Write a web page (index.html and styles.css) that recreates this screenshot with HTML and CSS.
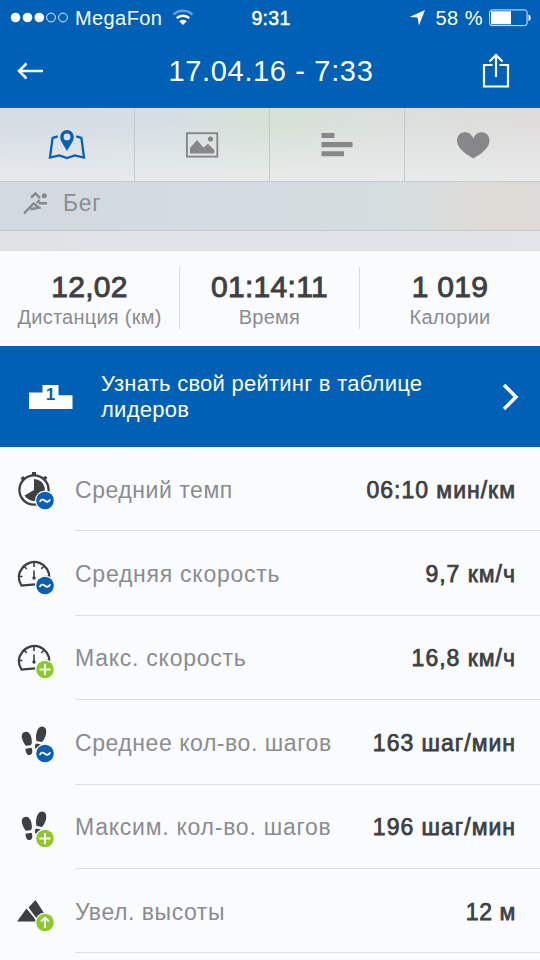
FILE: index.html
```html
<!DOCTYPE html>
<html lang="ru">
<head>
<meta charset="utf-8">
<title>17.04.16 - 7:33</title>
<link rel="stylesheet" href="styles.css">
</head>
<body>
<svg class="defs" width="0" height="0">
  <defs>
    <g id="avg">
      <circle cx="31" cy="33.500" r="10" fill="#fafbfd"/>
      <circle cx="31" cy="33.500" r="8.800" fill="#0860b4"/>
      <path d="M25.800 35c1.200-3 3.200-2.800 5.100-1.200s4 1.300 5.300-1.500" fill="none" stroke="#fff" stroke-width="1.800"/>
    </g>
    <g id="plus">
      <circle cx="31" cy="33.500" r="10" fill="#fafbfd"/>
      <circle cx="31" cy="33.500" r="8.800" fill="#8dc92c"/>
      <path d="M31 28v11M25.500 33.500h11" stroke="#fff" stroke-width="1.800"/>
    </g>
    <g id="gauge">
      <path d="M7.500 33.500C4 28 4 21.500 8.300 16a15 15 0 0 1 27 10M6.500 33.600l15-1.200" fill="none" stroke="#3d4043" stroke-width="2.300"/>
      <path d="M20 18.500v7M20 11v4M10.500 14.500l2.200 2.500M29.500 14.500l-2.200 2.500M5 24.500h3.500M31.500 24.500H35" stroke="#3d4043" stroke-width="1.600"/>
      <circle cx="20" cy="26" r="1.700" fill="#3d4043"/>
    </g>
    <g id="steps" fill="#3d4043">
      <path d="M9.500 12.500c3.500-2 6.500 0 7.700 4.500.9 4 1 7.500-.7 8.200l-4.700.6C8.500 21.500 6 15 9.500 12.500zM11.500 28.700l6-.9c1.500 3 1 7-1.800 7.300-2.700.3-4.200-2.700-4.200-6.400zM23.500 10c2-4.500 7-4.500 8.400-.8 1.300 4.300-1.200 9.800-3.900 12.800l-5.500-1c-1-3.200-.5-8 1-11zM22 23.500l5 1-5.500 4.500c-.9-2.200-.5-4.500.5-5.500z"/>
    </g>
  </defs>
</svg>
<header class="top">
  <div class="status">
    <div class="carrier">
      <svg width="60" height="14" viewBox="0 0 60 14"><g fill="#fff"><circle cx="5.500" cy="6.500" r="4.800"/><circle cx="17.500" cy="6.500" r="4.800"/><circle cx="29.300" cy="6.500" r="4.800"/></g><g fill="none" stroke="#fff" stroke-width=".9"><circle cx="41" cy="6.500" r="4.400"/><circle cx="53" cy="6.500" r="4.400"/></g></svg>
      <span class="operator">MegaFon</span>
      <svg class="wifi" width="22" height="18" viewBox="0 0 22 18"><g fill="none" stroke="#fff" stroke-width="2.400"><path d="M1.500 5.500a14 14 0 0 1 19 0" opacity=".4"/><path d="M4.800 9.200a9.200 9.200 0 0 1 12.400 0"/></g><path d="M7.300 12.200a5.500 5.500 0 0 1 7.400 0L11 16z" fill="#fff"/></svg>
    </div>
    <div class="clock">9:31</div>
    <div class="power">
      <svg width="17" height="16" viewBox="0 0 17 16"><path d="M16 0L10 15.500 8.500 7.500.5 7z" fill="#fff"/></svg>
      <span class="percent">58 %</span>
      <svg width="42" height="18" viewBox="0 0 42 18"><rect x=".6" y=".9" width="37.500" height="15.700" rx="2.500" fill="none" stroke="#fff" stroke-width=".9"/><path d="M2 2.200h20v13H2zM39.500 5.500c3 .5 3 6 0 6.500z" fill="#fff"/></svg>
    </div>
  </div>
  <div class="nav">
    <svg class="back" width="28" height="20" viewBox="0 0 28 20"><path d="M27 10H3M10.500 2.500L3 10l7.500 7.500" fill="none" stroke="#fff" stroke-width="2.500"/></svg>
    <h1 class="title">17.04.16 - 7:33</h1>
    <svg class="share" width="28" height="36" viewBox="0 0 28 36"><path d="M10.500 12H2v21.500h24V12h-8.500M14 24V3M7.500 8.500L14 2l6.500 6.500" fill="none" stroke="#fff" stroke-width="2.200"/></svg>
  </div>
</header>
<nav class="tabs">
  <div class="tab"><svg width="38" height="34" viewBox="0 0 38 34"><path d="M9.800 8.300L4.600 9.800 2 29.500l9.300-2L19 30.100l7.700-2.600L36 29.500 33.400 9.800 28.200 8.300" fill="none" stroke="#0860b4" stroke-width="2.300"/><path fill-rule="evenodd" d="M19 2a6.800 6.800 0 0 0-6.800 6.800C12.200 13.500 16 17.500 19 23c3-5.500 6.800-9.500 6.800-14.200A6.800 6.800 0 0 0 19 2zm0 3.500a3.400 3.400 0 1 1 0 6.800A3.400 3.400 0 0 1 19 5.500z" fill="#0860b4"/></svg></div>
  <div class="tab"><svg width="34" height="26" viewBox="0 0 34 26"><rect x="1.900" y="1.200" width="30.400" height="23.400" fill="none" stroke="#87878a" stroke-width="1.900"/><path d="M5 21.500v-5.500l7-8 6.500 7.500 4.500-3.800 6.300 6.300v3.500z" fill="#87878a"/><circle cx="25.500" cy="7" r="2.600" fill="#87878a"/></svg></div>
  <div class="tab"><svg width="34" height="26" viewBox="0 0 34 26"><path d="M1.500 1h13v5h-13zM1.500 10h31v5.200h-31zM1.500 19.200H24v5H1.500z" fill="#87878a"/></svg></div>
  <div class="tab"><svg width="34" height="28" viewBox="0 0 34 28"><path d="M17.300 27.500C10 23 1 17.500 1 9.500 1 4.500 4.500 1.200 9 1.200c4 0 7 2.500 8.300 6.300C18.500 3.700 21.500 1.200 25.500 1.200c4.500 0 8 3.300 8 8.300 0 8-9 13.500-16.200 18z" fill="#87878a"/></svg></div>
</nav>
<div class="activity">
  <svg class="runner" width="26" height="24" viewBox="0 0 26 24"><path d="M9 6.500L13.500 2.500l4.500 4.800M2 22.500l10-10.500M11 12l6 4.500-8.500 1.700M17 12.200h8M17.500 9l-2.500 3" fill="none" stroke="#85878a" stroke-width="2.400"/><circle cx="22.300" cy="4.700" r="2.500" fill="#85878a"/></svg>
  <span class="sport">Бег</span>
</div>
<div class="strip"></div>
<section class="stats">
  <div class="stat"><div class="num">12,02</div><div class="cap">Дистанция (км)</div></div>
  <div class="stat"><div class="num">01:14:11</div><div class="cap">Время</div></div>
  <div class="stat"><div class="num">1 019</div><div class="cap">Калории</div></div>
</section>
<section class="banner">
  <svg class="podium" width="46" height="26" viewBox="0 0 46 26"><path d="M1 25V8.500h13.500V1h16v10.300h14V25z" fill="#fff"/><text x="22.500" y="15.500" class="rank">1</text></svg>
  <p class="pitch">Узнать свой рейтинг в таблице<br>лидеров</p>
  <svg class="chevron" width="20" height="30" viewBox="0 0 20 30"><path d="M3 3l12 12L3 27" fill="none" stroke="#fff" stroke-width="3.500"/></svg>
</section>
<main class="list">
  <div class="row"><svg class="icon" width="44" height="46" viewBox="0 0 44 46"><circle cx="20" cy="23" r="14.600" fill="none" stroke="#3d4043" stroke-width="2.300"/><path d="M20 23V12a11 11 0 1 1-9.500 16.500zM18 5h4v4h-4zM6.500 11.500l2.500-2.500 2.500 2.500-2.500 2.500zM29 11l2.200-2.200 2.300 2.200-2.300 2.300z" fill="#3d4043"/><use href="#avg"/></svg><div class="line"><span class="label">Средний темп</span><span class="value">06:10 мин/км</span></div></div>
  <div class="row"><svg class="icon" width="44" height="46" viewBox="0 0 44 46"><use href="#gauge"/><use href="#avg"/></svg><div class="line"><span class="label wide">Средняя скорость</span><span class="value">9,7 км/ч</span></div></div>
  <div class="row"><svg class="icon" width="44" height="46" viewBox="0 0 44 46"><use href="#gauge"/><use href="#plus"/></svg><div class="line"><span class="label wide">Макс. скорость</span><span class="value">16,8 км/ч</span></div></div>
  <div class="row"><svg class="icon" width="44" height="46" viewBox="0 0 44 46"><use href="#steps"/><use href="#avg"/></svg><div class="line"><span class="label">Среднее кол-во. шагов</span><span class="value">163 шаг/мин</span></div></div>
  <div class="row"><svg class="icon" width="44" height="46" viewBox="0 0 44 46"><use href="#steps"/><use href="#plus"/></svg><div class="line"><span class="label wide">Максим. кол-во. шагов</span><span class="value">196 шаг/мин</span></div></div>
  <div class="row"><svg class="icon" width="44" height="46" viewBox="0 0 44 46"><path d="M3 32.500l9.500-13L19.500 28l3 4.500zM14.500 18.500L21.500 11 31 25.500v7h-6z" fill="#3d4043"/><circle cx="31" cy="33.500" r="10" fill="#fafbfd"/><circle cx="31" cy="33.500" r="8.800" fill="#8dc92c"/><path d="M31 39V28.500M27 32.500l4-4 4 4" fill="none" stroke="#fff" stroke-width="1.900"/></svg><div class="line"><span class="label">Увел. высоты</span><span class="value short">12 м</span></div></div>
</main>
</body>
</html>
```
FILE: styles.css
```css
* { box-sizing: border-box; }
body {
  margin: 0;
  width: 540px;
  height: 960px;
  overflow: hidden;
  background: #fafbfd;
  font-family: "Liberation Sans", sans-serif;
  color: #3d4043;
}
svg { display: block; flex: none; }
.defs { position: absolute; }
.top { height: 108px; background: #0060b5; color: #fff; }
.status {
  height: 36px;
  display: grid;
  grid-template-columns: 1fr auto 1fr;
  align-items: center;
  padding: 0 9px 0 10px;
  font-size: 20px;
}
.carrier, .power { display: flex; align-items: center; }
.power { justify-content: flex-end; }
.operator { margin-left: 5px; letter-spacing: .4px; }
.wifi { margin-left: 10px; }
.clock { padding-left: 1px; font-size: 19.500px; letter-spacing: .3px; -webkit-text-stroke: .5px #fff; }
.percent { margin: 0 6px 0 9px; letter-spacing: .5px; }
.nav { height: 72px; display: flex; align-items: center; padding: 0 30px 2px 16px; }
.title { flex: 1; margin: 0; text-align: center; font-size: 29px; font-weight: 400; letter-spacing: .65px; padding-left: 16px; }
.tabs {
  height: 74px;
  display: grid;
  grid-template-columns: repeat(4, 1fr);
  background: linear-gradient(to bottom, rgba(238,239,241,0) 20%, rgba(236,237,239,.8)), linear-gradient(to right, #d5dce3 0%, #d5dfe3 32%, #d6e1d6 49%, #dbe0dc 70%, #dfdddc 100%);
  border-bottom: 1px solid #c5cccf;
}
.tab { display: flex; align-items: center; justify-content: center; padding-top: 1px; border-right: 1px solid #c3cbd0; }
.tab:last-child { border-right: 0; }
.activity {
  height: 49px;
  display: flex;
  align-items: center;
  padding: 0 22px 6px;
  background: linear-gradient(to right, #d2d9e0, #d2dce1 40%, #d6dddf 75%, #dfdcd7 90%, #dedbd8);
  border-bottom: 1px solid #c3c9cc;
}
.sport { margin-left: 15px; font-size: 23px; letter-spacing: .7px; color: #8b8d90; }
.strip { height: 20px; background: linear-gradient(to right, #e1e2e4, #e1e5e8); border-bottom: 1px solid #dddfe2; }
.stats { height: 95px; display: grid; grid-template-columns: repeat(3, 1fr); padding: 16px 0 17px; text-align: center; }
.stat { border-right: 1px solid #d8dadd; }
.stat:last-child { border-right: 0; }
.num { height: 38px; line-height: 40px; font-size: 30px; letter-spacing: .3px; -webkit-text-stroke: .9px #3d4043; }
.cap { line-height: 24px; font-size: 20px; letter-spacing: .25px; color: #8b8c8f; }
.banner { height: 101px; background: #0060b5; color: #fff; display: flex; align-items: center; padding: 0 19px 0 28px; }
.rank { font: 700 17px "Liberation Sans", sans-serif; fill: #0060b5; text-anchor: middle; }
.pitch { flex: 1; margin: 0 0 0 27px; font-size: 22px; line-height: 26px; letter-spacing: .25px; }
.row { height: 84.400px; display: flex; align-items: center; padding-left: 14px; }
.icon { margin: 2px 17px 0 0; }
.line { flex: 1; height: 100%; display: flex; align-items: center; justify-content: space-between; padding: 3px 24px 0 0; border-bottom: 1px solid #dcdee1; }
.label { font-size: 23px; letter-spacing: .55px; color: #8b8c8f; }
.wide { letter-spacing: .75px; }
.value { font-size: 23px; letter-spacing: 1px; -webkit-text-stroke: .75px #3d4043; }
.short { letter-spacing: .6px; }
```
